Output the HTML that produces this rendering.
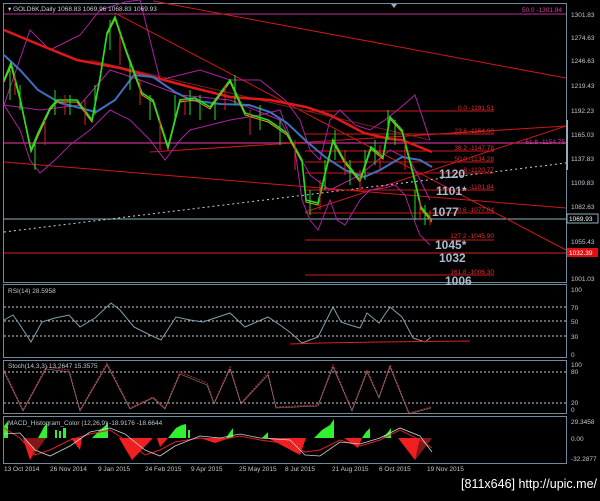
<!DOCTYPE html>
<html><head><meta charset="utf-8"><style>
html,body{margin:0;padding:0;background:#000;}
body{width:600px;height:496px;overflow:hidden;font-family:"Liberation Sans",sans-serif;}
svg text{font-family:"Liberation Sans",sans-serif;}
</style></head><body>
<svg width="600" height="496" viewBox="0 0 600 496" xmlns="http://www.w3.org/2000/svg">
<rect width="600" height="496" fill="#000"/>
<!-- panel borders -->
<g fill="none" stroke="#6f8a9a" stroke-width="1">
<rect x="3.5" y="3.5" width="563" height="279"/>
<rect x="3.5" y="284.5" width="563" height="73"/>
<rect x="3.5" y="360.5" width="563" height="53"/>
<rect x="3.5" y="416.5" width="563" height="47"/>
</g>
<rect x="566" y="120" width="2" height="50" fill="#9ab"/>
<!-- main chart -->
<g stroke-width="1" fill="none">
<line x1="4" y1="14" x2="566" y2="14" stroke="#c03090"/>
<line x1="4" y1="143" x2="566" y2="143" stroke="#c03090" stroke-width="1.3"/>
<line x1="4" y1="219" x2="566" y2="219" stroke="#8fb0c0"/>
<line x1="4" y1="253" x2="566" y2="253" stroke="#e02020"/>
<!-- trend lines -->
<line x1="153" y1="1" x2="566" y2="78" stroke="#d01818"/>
<line x1="115" y1="13" x2="566" y2="250" stroke="#d01818"/>
<line x1="4" y1="162" x2="566" y2="208" stroke="#d01818"/>
<line x1="305" y1="212" x2="566" y2="126" stroke="#d01818"/>
<line x1="150" y1="152" x2="566" y2="126" stroke="#d01818"/>
<line x1="4" y1="232" x2="566" y2="163" stroke="#c8d0d8" stroke-dasharray="2,3"/>
<line x1="90" y1="60" x2="430" y2="140" stroke="#7a2020"/>
<!-- fib lines -->
<g stroke="#d01818">
<line x1="305" y1="111" x2="494" y2="111"/>
<line x1="305" y1="134" x2="494" y2="134"/>
<line x1="305" y1="151" x2="494" y2="151"/>
<line x1="305" y1="162" x2="494" y2="162"/>
<line x1="305" y1="173" x2="494" y2="173"/>
<line x1="305" y1="190" x2="494" y2="190"/>
<line x1="305" y1="213" x2="494" y2="213"/>
<line x1="305" y1="240" x2="494" y2="240"/>
<line x1="305" y1="275" x2="494" y2="275"/>
</g>
<!-- bollinger -->
<polyline stroke="#b020a0" points="4,105 30,30 50,50 80,35 100,10 125,2 140,0 150,40 160,80 180,75 200,70 230,80 260,80 285,100 300,120 310,150 320,160 330,120 340,110 355,125 370,130 385,120 400,108 415,95 430,140"/>
<polyline stroke="#b020a0" points="4,105 20,130 30,160 40,173 55,160 70,145 90,130 110,110 130,120 150,140 165,160 180,140 190,130 210,125 230,120 260,115 280,110 295,150 302,200 310,220 318,230 330,200 337,220 345,225 360,200 370,190 385,188 395,185 405,195 412,215 420,235 430,245"/>
<polyline stroke="#b020a0" points="4,105 40,110 80,105 110,70 140,80 180,95 230,100 280,120 310,175 330,190 360,175 390,150 410,160 430,200"/>
<!-- MA lines -->
<polyline stroke="#e01818" stroke-width="2.5" points="4,30 40,45 77,60 120,68 153,77 190,87 230,97 270,100 306,107 330,115 364,133 390,139 402,140 432,152"/>
<polyline stroke="#4070c0" stroke-width="2" points="4,55 20,70 38,90 60,103 96,112 115,100 134,75 153,77 175,92 191,100 220,104 249,105 270,112 287,123 305,140 325,157 345,170 364,177 380,170 402,157 420,160 432,167"/>
<!-- price -->
<polyline stroke="#e0a020" stroke-width="1" points="4,82 11,66 20,100 31,152 38,136 50,110 57,102 77,102 92,122 100,80 107,35 115,19 126,52 142,95 153,102 168,149 180,102 195,100 210,109 230,82 245,115 268,122 287,135 302,162 306,202 318,205 333,142 344,162 360,182 371,149 383,159 390,119 402,132 413,175 421,209 432,222"/>
<polyline stroke="#20e020" stroke-width="1.6" points="4,80 11,63 20,98 31,150 38,133 50,108 57,100 77,100 92,120 100,78 107,33 115,17 126,50 142,93 153,100 168,147 180,100 195,98 210,107 230,80 245,113 268,120 287,133 302,160 306,200 318,203 333,140 344,160 360,180 371,147 383,157 390,117 402,130 413,173 421,207 432,220"/>
<g stroke="#20e020" stroke-width="1">
<path d="M10,70v30M20,85v25M35,140v30M55,90v25M70,95v20M95,85v30M110,20v30M130,60v30M150,95v25M175,95v25M190,90v25M200,95v25M215,100v20M235,75v30M260,105v25M280,120v25M310,190v25M325,160v30M335,130v30M350,160v25M365,150v30M375,140v25M388,110v30M395,120v25M415,190v30M425,205v20"/>
</g>
<g stroke="#e02020" stroke-width="1">
<path d="M15,75v20M45,120v25M65,95v20M85,100v25M120,35v30M140,80v25M160,120v30M185,95v20M225,85v25M250,110v25M295,140v30M320,180v30M345,150v25M360,170v20M380,145v25M405,140v30M420,200v20M430,210v15"/>
</g>
</g>
<!-- fib labels -->
<g font-size="6.5" fill="#e03030" text-anchor="end">
<text x="494" y="110">0.0 -1191.51</text>
<text x="494" y="133">23.6 -1164.90</text>
<text x="494" y="150">38.2 -1147.78</text>
<text x="494" y="161">50.0 -1134.28</text>
<text x="494" y="172">8 -1120.77</text>
<text x="494" y="189">-1101.84</text>
<text x="494" y="212">0.6 -1077.04</text>
<text x="494" y="238">127.2 -1045.90</text>
<text x="494" y="274">161.8 -1006.30</text>
<text x="565" y="144" fill="#d040a0">61.8 -1154.75</text>
<text x="562" y="12" fill="#d040a0">50.0 -1301.84</text>
</g>
<g font-size="12" font-weight="bold" fill="#a8bccc">
<text x="439" y="178">1120</text>
<text x="436" y="195">1101*</text>
<text x="432" y="216">1077</text>
<text x="435" y="249">1045*</text>
<text x="439" y="262">1032</text>
<text x="445" y="285">1006</text>
</g>
<text x="8" y="11" font-size="6.5" fill="#c8d0d8">▾ GOLD6K,Daily  1068.83 1069.96 1068.83 1069.93</text>
<path d="M391,4h6l-3,4z" fill="#8fb0c0"/>
<!-- right axis -->
<g font-size="6.5" fill="#c0c8d0">
<text x="571" y="17">1301.83</text>
<text x="571" y="40">1274.63</text>
<text x="571" y="63">1246.63</text>
<text x="571" y="88">1219.43</text>
<text x="571" y="113">1192.23</text>
<text x="571" y="137">1165.03</text>
<text x="571" y="161">1137.83</text>
<text x="571" y="185">1109.83</text>
<text x="571" y="209">1082.63</text>
<text x="571" y="244">1055.43</text>
<text x="571" y="281">1001.03</text>
</g>
<rect x="567" y="214" width="31" height="9" fill="#000" stroke="#8fb0c0"/>
<text x="569" y="221" font-size="6.5" fill="#fff">1069.93</text>
<rect x="567" y="248" width="31" height="9" fill="#e01010"/>
<text x="569" y="255" font-size="6.5" fill="#fff">1032.39</text>
<!-- RSI -->
<g stroke="#c8d0d8" stroke-dasharray="2,2"><line x1="4" y1="307" x2="566" y2="307"/><line x1="4" y1="321" x2="566" y2="321"/><line x1="4" y1="336" x2="566" y2="336"/></g>
<polyline fill="none" stroke="#7fa0b0" points="4,320 13,315 20,325 31,342 42,322 55,318 69,315 80,327 95,318 111,303 120,310 134,327 150,335 161,340 176,317 190,320 203,322 215,318 230,313 245,327 268,317 280,325 291,333 302,343 318,337 333,307 341,322 350,325 360,328 367,313 379,323 390,307 402,317 413,338 425,342 431,337"/>
<polyline fill="none" stroke="#e02020" points="290,344 320,343 380,342 470,341"/>
<text x="8" y="293" font-size="6.5" fill="#c0c8d0">RSI(14) 28.5958</text>
<g font-size="6.5" fill="#c0c8d0"><text x="571" y="292">100</text><text x="571" y="310">70</text><text x="571" y="324">50</text><text x="571" y="339">30</text><text x="571" y="357">0</text></g>
<!-- Stoch -->
<g stroke="#c8d0d8" stroke-dasharray="2,2"><line x1="4" y1="372" x2="566" y2="372"/><line x1="4" y1="403" x2="566" y2="403"/></g>
<polyline fill="none" stroke="#d02020" stroke-dasharray="2,1" points="4,370 23,410 46,367 69,370 80,410 107,363 130,408 153,397 165,408 180,372 207,383 214,403 230,367 241,403 268,373 276,407 318,405 333,365 352,410 367,370 379,397 390,365 409,413 431,407"/>
<polyline fill="none" stroke="#8090a0" stroke-width="0.6" points="4,372 23,411 46,369 69,372 80,411 107,365 130,409 153,398 165,409 180,374 207,385 214,404 230,369 241,404 268,375 276,408 318,406 333,367 352,411 367,372 379,398 390,367 409,414 431,408"/>
<text x="8" y="368" font-size="6.5" fill="#c0c8d0">Stoch(14,3,3) 13.2647 15.3575</text>
<g font-size="6.5" fill="#c0c8d0"><text x="571" y="367">100</text><text x="571" y="374">80</text><text x="571" y="405">20</text><text x="571" y="412">0</text></g>
<!-- MACD -->
<g fill="#30f030">
<polygon points="4,438 4,426 8,421 8,438"/>
<polygon points="38,438 44,427 47,423 47,438"/>
<rect x="55" y="430" width="2" height="8"/><rect x="59" y="431" width="2" height="7"/><rect x="63" y="428" width="3" height="10"/>
<polygon points="92,438 100,430 106,425 108,421 108,438"/>
<polygon points="168,438 176,428 182,425 186,424 186,438"/><rect x="188" y="430" width="2" height="8"/>
<polygon points="226,438 230,432 233,428 233,438"/>
<polygon points="262,438 268,432 268,438"/>
<polygon points="314,438 322,430 330,425 332,422 334,419 334,438"/>
<polygon points="362,438 366,432 370,428 370,438"/>
<polygon points="383,438 388,432 391,428 391,438"/>
</g>
<g fill="#f02020">
<polygon points="23,438 46,438 30,460"/>
<polygon points="71,438 82,438 80,450"/>
<polygon points="119,438 153,438 132,460"/>
<polygon points="157,438 168,438 160,447"/>
<polygon points="200,438 230,438 215,443"/>
<polygon points="268,438 306,438 300,455"/>
<polygon points="344,438 362,438 358,448"/>
<polygon points="398,438 432,438 415,460"/>
</g>
<g fill="#801818"><polygon points="23,438 46,438 30,460 35,448"/><polygon points="415,460 432,438 420,438"/></g>
<polyline fill="none" stroke="#e02020" points="4,428 20,438 35,455 50,450 70,440 90,434 110,430 125,440 145,455 160,450 175,442 200,438 220,440 240,436 260,440 290,444 305,452 320,450 340,440 360,446 380,440 400,430 420,440 432,448"/>
<polyline fill="none" stroke="#c8d0d8" stroke-width="0.8" points="4,434 20,433 35,450 50,456 70,446 90,432 110,428 125,434 145,450 160,456 175,446 200,436 220,438 240,434 260,438 290,440 305,455 320,456 340,442 360,444 380,438 400,428 420,436 432,452"/>
<text x="8" y="425" font-size="6.5" fill="#c0c8d0">MACD_Histogram_Color (12,26,9) -18.9176 -18.6644</text>
<g font-size="6.5" fill="#c0c8d0"><text x="571" y="424">29.3458</text><text x="571" y="441">0.00</text><text x="571" y="461">-32.2877</text></g>
<!-- dates -->
<g font-size="6.5" fill="#c0c8d0">
<text x="4" y="471">13 Oct 2014</text><text x="50" y="471">26 Nov 2014</text><text x="98" y="471">9 Jan 2015</text><text x="145" y="471">24 Feb 2015</text><text x="191" y="471">9 Apr 2015</text><text x="239" y="471">25 May 2015</text><text x="285" y="471">8 Jul 2015</text><text x="332" y="471">21 Aug 2015</text><text x="379" y="471">6 Oct 2015</text><text x="427" y="471">19 Nov 2015</text>
</g>
<text x="597" y="488" font-size="12.5" fill="#fff" text-anchor="end" font-family="Liberation Mono">[811x646] http://upic.me/</text>
</svg>
</body></html>
